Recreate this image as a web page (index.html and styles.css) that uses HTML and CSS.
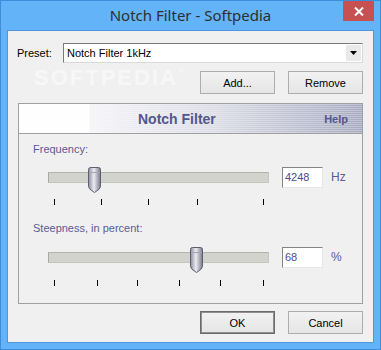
FILE: index.html
```html
<!DOCTYPE html>
<html lang="en">
<head>
  <meta charset="UTF-8">
  <meta name="viewport" content="width=device-width, initial-scale=1">
  <title>Notch Filter - Softpedia</title>
  <link rel="stylesheet" href="styles.css">
</head>
<body>
  <div class="window">
    <div class="titlebar">
      <span></span>
      <span class="title">Notch Filter - Softpedia</span>
      <button class="close" type="button" aria-label="Close">
        <svg width="10" height="9" viewBox="0 0 10 9"><path d="M1 0.5 L9 8.5 M9 0.5 L1 8.5" stroke="#fff" stroke-width="2"/></svg>
      </button>
    </div>

    <div class="client">
      <!-- watermark sits over the dialog background -->
      <div class="watermark">SOFTPEDIA<sup>®</sup></div>

      <div class="preset-row">
        <label class="preset-label">Preset:</label>
        <div class="combo">
          <span class="combo-text">Notch Filter 1kHz</span>
          <span class="combo-btn">
            <svg width="7" height="4" viewBox="0 0 7 4"><path d="M0 0 H7 L3.5 4Z" fill="#000"/></svg>
          </span>
        </div>
      </div>

      <div class="button-row">
        <button type="button">Add...</button>
        <button type="button">Remove</button>
      </div>

      <div class="panel">
        <div class="panel-head">
          <div class="head-blank"></div>
          <div class="head-main">
            <span class="head-title">Notch Filter</span>
            <span class="head-help">Help</span>
          </div>
        </div>

        <div class="panel-body">
          <div class="field-label first">Frequency:</div>
          <div class="slider-row">
            <div class="slider">
              <div class="track"></div>
              <svg class="thumb" style="left:40px" width="13" height="26" viewBox="0 0 13 26">
                <defs>
                  <linearGradient id="thumbFill1" x1="0" x2="1">
                    <stop offset="0" stop-color="#8c8c9e"/>
                    <stop offset="0.45" stop-color="#ececf2"/>
                    <stop offset="1" stop-color="#777789"/>
                  </linearGradient>
                </defs>
                <path d="M2.5 0.5 H10.5 Q12.5 0.5 12.5 2.5 V19.5 Q12.5 22 6.5 25.5 Q0.5 22 0.5 19.5 V2.5 Q0.5 0.5 2.5 0.5Z" fill="url(#thumbFill1)" stroke="#5e5e6e"/>
                <path d="M1 5.5 H12" stroke="#a4a4b4"/>
              </svg>
            </div>
            <div class="textbox">4248</div>
            <span class="unit">Hz</span>
          </div>
          <div class="ticks">
            <i style="left:6px"></i><i style="left:53px"></i><i style="left:100px"></i><i style="left:149px"></i><i style="left:215px"></i>
          </div>

          <div class="field-label second">Steepness, in percent:</div>
          <div class="slider-row lower">
            <div class="slider">
              <div class="track"></div>
              <svg class="thumb" style="left:142px" width="13" height="26" viewBox="0 0 13 26">
                <defs>
                  <linearGradient id="thumbFill2" x1="0" x2="1">
                    <stop offset="0" stop-color="#8c8c9e"/>
                    <stop offset="0.45" stop-color="#ececf2"/>
                    <stop offset="1" stop-color="#777789"/>
                  </linearGradient>
                </defs>
                <path d="M2.5 0.5 H10.5 Q12.5 0.5 12.5 2.5 V19.5 Q12.5 22 6.5 25.5 Q0.5 22 0.5 19.5 V2.5 Q0.5 0.5 2.5 0.5Z" fill="url(#thumbFill2)" stroke="#5e5e6e"/>
                <path d="M1 5.5 H12" stroke="#a4a4b4"/>
              </svg>
            </div>
            <div class="textbox">68</div>
            <span class="unit">%</span>
          </div>
          <div class="ticks lower">
            <i style="left:6px"></i><i style="left:49px"></i><i style="left:89px"></i><i style="left:131px"></i><i style="left:172px"></i><i style="left:215px"></i>
          </div>
        </div>
      </div>

      <div class="button-row bottom">
        <button type="button" class="default">OK</button>
        <button type="button">Cancel</button>
      </div>
    </div>
  </div>
</body>
</html>
```

FILE: styles.css
```css
/* dialog frame */
body { margin: 0; font-family: "Liberation Sans", Arial, sans-serif; font-size: 11px; color: #000; }
.window { width: 381px; height: 350px; box-sizing: border-box; border: 1px solid #3e8ddb; background: #63b3f8; padding: 0 6px 6px; display: flex; flex-direction: column; }
.titlebar { height: 29px; display: grid; grid-template-columns: 1fr auto 1fr; }
.title { font-family: "Noto Sans", sans-serif; font-size: 15px; color: #2e2e2e; line-height: 29px; }
.close { justify-self: end; width: 31px; height: 20px; border: none; padding: 0; background: #c75050; display: flex; align-items: center; justify-content: center; }
.client { flex: 1; position: relative; background: #f0f0f0; border: 1px solid #4f97dd; display: flex; flex-direction: column; overflow: hidden; }

.watermark { position: absolute; left: 26px; top: 29px; font: bold 22px/22px "Liberation Sans", Arial, sans-serif; letter-spacing: 2px; color: rgba(255,255,255,0.5); pointer-events: none; }
.watermark sup { font-size: 8px; vertical-align: 12px; }

/* preset selector */
.preset-row { display: flex; align-items: center; margin-top: 12px; padding: 0 10px 0 9px; position: relative; }
.preset-label { width: 46px; flex: none; }
.combo { flex: 1; height: 20px; box-sizing: border-box; display: flex; align-items: center; background: #fff; border: 1px solid; border-color: #7a7a7a #dadada #dadada #7a7a7a; padding: 1px; }
.combo-text { flex: 1; padding-left: 2px; }
.combo-btn { width: 15px; height: 16px; background: #e9e9e9; border-left: 1px solid #fff; display: flex; align-items: center; justify-content: center; }

/* push buttons */
.button-row { display: flex; justify-content: flex-end; gap: 13px; padding-right: 10px; margin-top: 8px; position: relative; }
.button-row.bottom { margin-top: 7px; }
button { font-family: "Liberation Sans", Arial, sans-serif; font-size: 11px; color: #000; }
.button-row button { width: 75px; height: 23px; padding: 0; border: 1px solid #adadad; background: linear-gradient(#f2f2f2, #e5e5e5); }
.button-row button.default { border-color: #6b6b6b; box-shadow: inset 0 0 0 1px #8f8f8f; }

/* filter panel */
.panel { margin: 9px 10px 0; height: 201px; box-sizing: border-box; border: 1px solid #a0a0a0; }
.panel-head { height: 29px; display: flex; border-bottom: 1px solid #a0a0a0; }
.head-blank { width: 70px; background: #fefefe; }
.head-main { flex: 1; display: flex; align-items: center; color: #55568a; font-weight: bold;
  background: repeating-linear-gradient(to bottom, rgba(255,255,255,0.28) 0 1px, rgba(0,0,0,0) 1px 2px), linear-gradient(to right, #f5f5f8, #dcdde7 45%, #a8acc1); }
.head-title { font-size: 14px; padding-left: 49px; }
.head-help { font-size: 11px; margin-left: auto; margin-right: 14px; }

.panel-body { padding-left: 14px; }
.field-label { line-height: 13px; color: #5a5a98; }
.field-label.first { margin-top: 9px; }
.field-label.second { margin-top: 17px; }
.slider-row { display: flex; align-items: flex-start; margin: 11px 0 0 15px; }
.slider-row.lower { margin-top: 12px; }
.slider { position: relative; width: 221px; height: 26px; flex: none; }
.track { margin-top: 5px; height: 11px; box-sizing: border-box; background: #d3d3cd; border: 1px solid #c6c6be; border-top-color: #b4b4ac; border-left-color: #aaaaa2; }
.thumb { position: absolute; top: 0; }
.textbox { width: 41px; height: 21px; box-sizing: border-box; margin-left: 13px; background: #fff; border: 1px solid; border-color: #848484 #e6e6e6 #e6e6e6 #848484; padding-left: 2px; line-height: 19px; color: #4c4c8e; }
.unit { margin-left: 8px; line-height: 21px; color: #5a5a98; font-size: 12px; }
.ticks { position: relative; height: 6px; width: 221px; margin: 6px 0 0 15px; }
.ticks.lower { margin-top: 7px; }
.ticks i { position: absolute; top: 0; width: 1px; height: 6px; background: #000; }
```
